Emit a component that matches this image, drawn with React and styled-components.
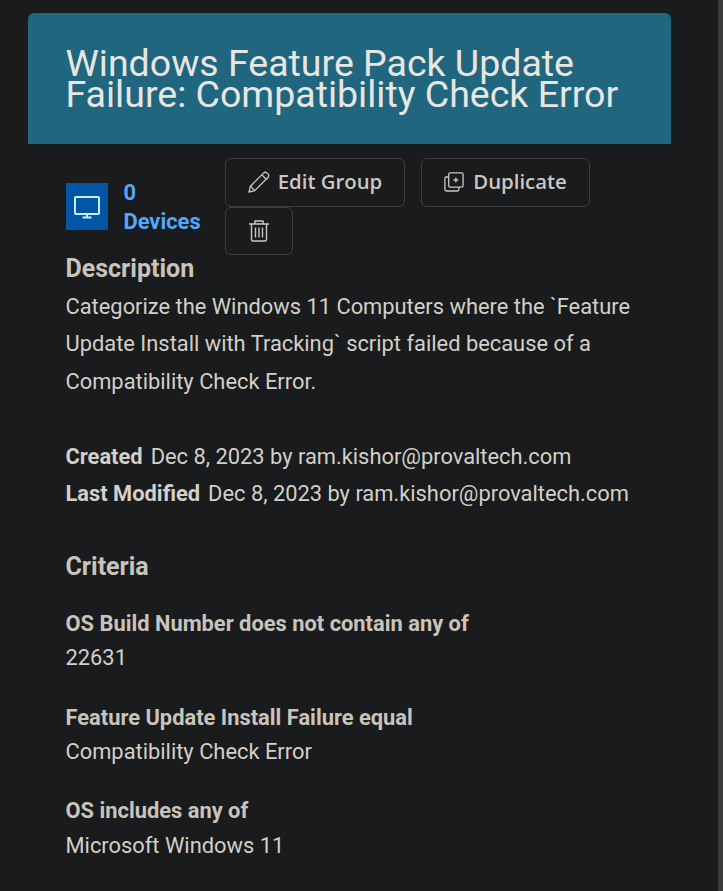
import React from "react";
import styled, { createGlobalStyle } from "styled-components";

const GlobalStyle = createGlobalStyle`
  * { box-sizing: border-box; }
  body {
    margin: 0;
    background: #191b1c;
    color: #d3cfc9;
    font-family: Roboto, "Liberation Sans", sans-serif;
    font-size: 21.875px;
  }
`;

const Page = styled.main`
  height: 891px;
  overflow: hidden;
  padding: 13px 47px 0 28px;
  border-right: 5px solid #3b3c3d;
`;

const Header = styled.header`
  height: 131px;
  padding: 35px 37.5px 0;
  border-radius: 6px 6px 0 0;
  background: #20667e;
`;

const Title = styled.h1`
  margin: 0;
  color: #e8e6e3;
  font-size: 37.5px;
  font-weight: 400;
  line-height: 31.25px;
  white-space: nowrap;
`;

const Content = styled.section`
  padding: 14px 0 0 37.5px;
`;

const Summary = styled.div`
  display: flex;
  height: 92px;
`;

const Devices = styled.div`
  display: flex;
  align-items: center;
  width: 159.5px;
  height: 97px;
`;

const DeviceTile = styled.div`
  display: grid;
  place-items: center;
  width: 42px;
  height: 47px;
  margin-right: 16px;
  background: #0356a6;
`;

const DeviceLink = styled.a`
  color: #52a8ff;
  font-weight: 700;
  line-height: 29px;
`;

const Actions = styled.div`
  display: flex;
  flex-wrap: wrap;
  align-content: flex-start;
  column-gap: 16px;
  width: 400px;
`;

const Button = styled.button`
  display: flex;
  align-items: center;
  justify-content: center;
  gap: ${(p) => p.$gap || 8}px;
  width: ${(p) => p.$width}px;
  height: ${(p) => p.$height || 49}px;
  padding: 0 0 ${(p) => (p.$height ? 0 : 2)}px;
  border: 1px solid #3b3d3e;
  border-radius: 6px;
  background: transparent;
  color: #cbc7c0;
  font: 600 20.35px/29px "Open Sans", "Noto Sans", sans-serif;
`;

const Heading = styled.h2`
  margin: ${(p) => p.$top || 0}px 0 0;
  color: #c9c4bb;
  font-size: 25px;
  font-weight: 700;
  line-height: 37.5px;
`;

const Paragraph = styled.p`
  width: 580px;
  margin: 0 0 37.5px;
  line-height: 37.5px;
`;

const Meta = styled.div`
  line-height: 37.5px;
  white-space: nowrap;
`;

const MetaLabel = styled.strong`
  margin-right: 8px;
`;

const Criteria = styled.dl`
  display: grid;
  gap: 25px;
  margin: 21.4px 0 0;
  line-height: 34.375px;
`;

const CriterionName = styled.dt`
  color: #c9c4bb;
  font-weight: 700;
`;

const CriterionValue = styled.dd`
  margin: 0;
`;

const MonitorIcon = () => (
  <svg width="26" height="24" viewBox="0 0 26 24" fill="none" stroke="#c5efff" strokeWidth="2">
    <rect x="1" y="2" width="24" height="17" rx="0.8" />
    <path d="M13 19v3M8.5 22.5h9" />
  </svg>
);

const PencilIcon = () => (
  <svg width="22" height="22" viewBox="0 0 22 22" fill="none" stroke="currentColor" strokeWidth="1.3" strokeLinejoin="round">
    <path d="M1 21 2.4 15.2 15.5 2.1Q17.3.3 19.1 2.1L19.9 2.9Q21.7 4.7 19.9 6.5L6.8 19.6Z" />
    <path d="m13.8 3.8 4.4 4.4M2.4 15.2 6.8 19.6" />
  </svg>
);

const DuplicateIcon = () => (
  <svg width="20" height="20" viewBox="0 0 20 20" fill="none" stroke="currentColor" strokeWidth="1.3">
    <rect x="4.7" y="0.8" width="14.4" height="14.4" rx="1.6" />
    <path d="M4.7 5H2.3Q.9 5 .9 6.4v11.2q0 1.4 1.4 1.4h11.2q1.4 0 1.4-1.4v-2.4M11.9 5.5v5M9.4 8h5" />
  </svg>
);

const TrashIcon = () => (
  <svg width="20" height="22" viewBox="0 0 20 22" fill="none" stroke="currentColor" strokeWidth="1.4">
    <path d="M0 4h20M6 4V1h8v3M2.5 4v15.5q0 1.5 1.5 1.5h12q1.5 0 1.5-1.5V4M6.5 7.5v10M10 7.5v10M13.5 7.5v10" />
  </svg>
);

const criteria = [
  ["OS Build Number does not contain any of", "22631"],
  ["Feature Update Install Failure equal", "Compatibility Check Error"],
  ["OS includes any of", "Microsoft Windows 11"],
];

export default function App() {
  return (
    <>
      <GlobalStyle />
      <Page>
        <Header>
          <Title>Windows Feature Pack Update<br />Failure: Compatibility Check Error</Title>
        </Header>
        <Content>
          <Summary>
            <Devices>
              <DeviceTile><MonitorIcon /></DeviceTile>
              <DeviceLink>0<br />Devices</DeviceLink>
            </Devices>
            <Actions>
              <Button $width={180}><PencilIcon />Edit Group</Button>
              <Button $width={169} $gap={9}><DuplicateIcon />Duplicate</Button>
              <Button $width={68} $height={48} aria-label="Delete group"><TrashIcon /></Button>
            </Actions>
          </Summary>
          <Heading>Description</Heading>
          <Paragraph>
            Categorize the Windows 11 Computers where the `Feature Update Install with Tracking` script failed because of a Compatibility Check Error.
          </Paragraph>
          <Meta><MetaLabel>Created</MetaLabel>Dec 8, 2023 by ram.kishor@provaltech.com</Meta>
          <Meta><MetaLabel>Last Modified</MetaLabel>Dec 8, 2023 by ram.kishor@provaltech.com</Meta>
          <Heading $top={35.5}>Criteria</Heading>
          <Criteria>
            {criteria.map(([name, value]) => (
              <div key={name}>
                <CriterionName>{name}</CriterionName>
                <CriterionValue>{value}</CriterionValue>
              </div>
            ))}
          </Criteria>
        </Content>
      </Page>
    </>
  );
}
